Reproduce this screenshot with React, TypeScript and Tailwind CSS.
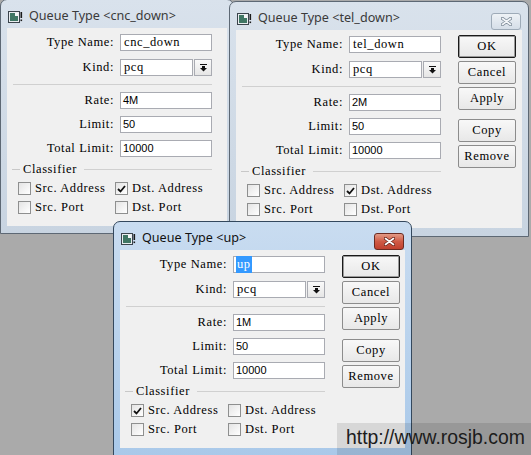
const mono = "font-['Liberation_Serif',serif] text-[12.5px] leading-none tracking-[0.6px] text-black whitespace-pre";
const sans = "font-['Liberation_Sans',Arial,sans-serif] text-[11px] leading-none text-black";

function WinIcon() {
  return (
    <svg width="15" height="12" viewBox="0 0 15 12" className="shrink-0">
      <rect x="0.5" y="0.5" width="11" height="11" fill="#e9edf0" stroke="#3b444c" />
      <rect x="2" y="2" width="8" height="8" fill="#3f7664" />
      <rect x="7" y="2" width="3" height="3" fill="#f4f6f7" />
      <rect x="12.5" y="1" width="1.6" height="6" fill="#1b1b1b" />
      <rect x="12.5" y="8.5" width="1.6" height="1.6" fill="#1b1b1b" />
    </svg>
  );
}

function CloseBox({ active }: { active: boolean }) {
  return (
    <div
      className={`mt-[6px] flex h-[17px] w-[30px] items-center justify-center self-start rounded-[3px] border ${
        active
          ? 'border-[#6b2b22] bg-linear-to-b from-[#e29a86] via-[#cf5a45] to-[#c0402e]'
          : 'border-[#9eabb8] bg-linear-to-b from-[#eef2f6] to-[#d5dee8]'
      }`}
    >
      <svg width="11" height="9" viewBox="0 0 11 9">
        <path d="M1.5 1.5 L9.5 7.5 M9.5 1.5 L1.5 7.5" stroke={active ? '#6b2a20' : '#7f8c99'} strokeWidth="3.4" strokeLinecap="round" />
        <path d="M1.5 1.5 L9.5 7.5 M9.5 1.5 L1.5 7.5" stroke={active ? '#ffffff' : '#f3f6f9'} strokeWidth="1.6" strokeLinecap="round" />
      </svg>
    </div>
  );
}

function DropGlyph() {
  return (
    <svg width="7" height="8" viewBox="0 0 7 8">
      <rect x="0" y="0" width="7" height="1" fill="#111" />
      <rect x="2" y="2" width="3" height="2" fill="#111" />
      <polygon points="0,4 7,4 3.5,7.5" fill="#111" />
    </svg>
  );
}

function Field({ label, value, num, selected }: { label: string; value: string; num?: boolean; selected?: boolean }) {
  return (
    <div className="flex h-[17px] items-center">
      <span className={`w-[107px] text-right ${mono}`}>{label}</span>
      <div className="ml-[6px] flex h-[17px] w-[92px] items-center border border-[#a9abb2] bg-white pl-[2px]">
        {selected ? (
          <span className={`bg-[#3399ff] px-[1px] py-[2px] ${mono} text-white`}>{value}</span>
        ) : (
          <span className={num ? sans : `pl-[1px] ${mono}`}>{value}</span>
        )}
      </div>
    </div>
  );
}

function Check({ on, label }: { on: boolean; label: string }) {
  return (
    <div className="flex w-[99px] items-center">
      <div className="flex h-[13px] w-[13px] shrink-0 items-center justify-center border border-[#8e8f8f] bg-linear-to-br from-[#e4e4e4] to-white">
        {on && (
          <svg width="9" height="8" viewBox="0 0 9 8">
            <path d="M1 4 L3.5 6.5 L8 1" fill="none" stroke="#111" strokeWidth="1.8" />
          </svg>
        )}
      </div>
      <span className={`ml-[4px] ${mono}`}>{label}</span>
    </div>
  );
}

function Btn({ label, def, className = '' }: { label: string; def?: boolean; className?: string }) {
  return (
    <div
      className={`flex h-[23px] w-[58px] items-center justify-center rounded-[2px] border bg-linear-to-b from-[#f8f8f8] to-[#e8e8e8] ${
        def ? 'border-[#1a1a1a] shadow-[inset_0_0_0_1px_#9a9a9a]' : 'border-[#8c8c8c]'
      } ${mono} ${className}`}
    >
      {label}
    </div>
  );
}

type WinProps = {
  pos: string;
  name: string;
  rate: string;
  checks: [boolean, boolean, boolean, boolean];
  active?: boolean;
  buttons?: boolean;
  selected?: boolean;
};

function QueueWindow({ pos, name, rate, checks, active = false, buttons = false, selected = false }: WinProps) {
  return (
    <div
      className={`absolute flex flex-col overflow-hidden rounded-t-[7px] border ${
        active
          ? 'border-[#34485d] bg-linear-to-b from-[#c9dcf0] to-[#a8c8e9]'
          : 'border-[#5d6874] bg-linear-to-b from-[#d9e2ec] to-[#c8d4e1]'
      } ${pos}`}
    >
      {/* title bar */}
      <div className="flex h-[28px] shrink-0 items-center pl-[7px] pr-[7px] pt-[5px]">
        <WinIcon />
        <span
          className={`ml-[6px] font-['Noto_Sans',sans-serif] text-[12.6px] leading-none ${
            active ? 'text-[#111]' : 'text-[#3a3a3a]'
          }`}
        >
          Queue Type &lt;{name}&gt;
        </span>
        <div className="flex-1" />
        {buttons && <CloseBox active={active} />}
      </div>

      {/* client area */}
      <div className="mx-[6px] flex h-[198px] shrink-0 bg-[#f0f0f0]">
        <div className="flex w-[205px] shrink-0 flex-col pt-[6px]">
          <Field label="Type Name:" value={name} selected={selected} />
          <div className="mt-[8px] flex h-[17px] items-center">
            <span className={`w-[107px] text-right ${mono}`}>Kind:</span>
            <div className="ml-[6px] flex h-[17px] w-[73px] items-center border border-[#a9abb2] bg-white pl-[3px]">
              <span className={mono}>pcq</span>
            </div>
            <div className="ml-[1px] flex h-[17px] w-[18px] items-center justify-center border border-[#a9abb2] bg-linear-to-b from-[#fafafa] to-[#e6e6e6]">
              <DropGlyph />
            </div>
          </div>
          <div className="ml-[6px] mt-[8px] h-px w-[199px] bg-[#d0d0d0]" />
          <div className="mt-[7px]">
            <Field label="Rate:" value={rate} num />
          </div>
          <div className="mt-[7px]">
            <Field label="Limit:" value="50" num />
          </div>
          <div className="mt-[7px]">
            <Field label="Total Limit:" value="10000" num />
          </div>
          <div className="mt-[6px] flex h-[12px] items-center">
            <div className="ml-[5px] h-px w-[8px] bg-[#c8c8c8]" />
            <span className={`ml-[3px] ${mono}`}>Classifier</span>
            <div className="ml-[7px] h-px flex-1 bg-[#d0d0d0]" />
          </div>
          <div className="mt-[7px] flex pl-[11px]">
            <Check on={checks[0]} label="Src. Address" />
            <Check on={checks[1]} label="Dst. Address" />
          </div>
          <div className="mt-[6px] flex pl-[11px]">
            <Check on={checks[2]} label="Src. Port" />
            <Check on={checks[3]} label="Dst. Port" />
          </div>
        </div>

        {buttons && (
          <div className="ml-[17px] flex flex-col pt-[5px]">
            <Btn label="OK" def />
            <Btn label="Cancel" className="mt-[3px]" />
            <Btn label="Apply" className="mt-[3px]" />
            <Btn label="Copy" className="mt-[9px]" />
            <Btn label="Remove" className="mt-[3px]" />
          </div>
        )}
      </div>
    </div>
  );
}

export default function App() {
  return (
    <div className="relative h-[455px] w-[531px] overflow-hidden bg-[#aaaaaa]">
      <QueueWindow
        pos="left-0 top-[-1px] w-[234px] h-[235px]"
        name="cnc_down"
        rate="4M"
        checks={[false, true, false, false]}
      />
      <QueueWindow
        pos="left-[229px] top-[1px] w-[300px] h-[236px]"
        name="tel_down"
        rate="2M"
        checks={[false, true, false, false]}
        buttons
      />
      <QueueWindow
        pos="left-[113px] top-[221px] w-[299px] h-[245px]"
        name="up"
        rate="1M"
        checks={[true, false, false, false]}
        buttons
        active
        selected
      />

      {/* watermark */}
      <div className="absolute left-[337px] top-[423px] flex h-[32px] w-[194px] items-center bg-black/10 pb-[2px] pl-[9px]">
        <span className="font-['Liberation_Sans',Arial,sans-serif] text-[19.4px] leading-none text-[#1c1c1c]">
          http://www.rosjb.com
        </span>
      </div>
    </div>
  );
}
